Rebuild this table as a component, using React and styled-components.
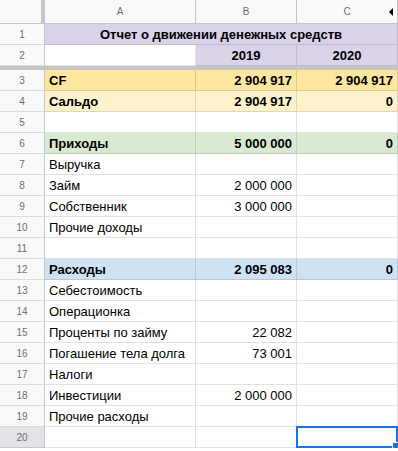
import React from 'react';
import styled, { createGlobalStyle, css } from 'styled-components';

const GlobalStyle = createGlobalStyle`
  html, body {
    margin: 0;
    padding: 0;
    background: #fff;
    overflow: hidden;
  }
  body {
    font-family: 'Liberation Sans', Arial, sans-serif;
  }
`;

const GRID = 'rgba(0, 0, 0, 0.115)';
const HEAD_LINE = '#c4c7c5';

const Sheet = styled.div`
  width: 398px;
  display: flex;
  flex-direction: column;
  font-family: 'Liberation Sans', Arial, sans-serif;
`;

const Row = styled.div`
  display: grid;
  grid-template-columns: 45px 151px 101px 1fr;
  height: ${p => p.$height || 21}px;
`;

const FreezeBar = styled.div`
  height: 4px;
  background: ${HEAD_LINE};
`;

const Corner = styled.div`
  box-sizing: border-box;
  background: #f8f9fa;
  border-right: 4px solid ${HEAD_LINE};
  border-bottom: 1px solid ${HEAD_LINE};
`;

const ColHead = styled.div`
  position: relative;
  box-sizing: border-box;
  background: #f8f9fa;
  border-right: 1px solid ${HEAD_LINE};
  border-bottom: 1px solid ${HEAD_LINE};
  display: flex;
  align-items: center;
  justify-content: center;
  font-size: 10px;
  color: #6f6f6f;
`;

const HiddenArrow = styled.span`
  position: absolute;
  right: 4px;
  top: 8px;
  width: 0;
  height: 0;
  border-top: 4px solid transparent;
  border-bottom: 4px solid transparent;
  border-right: 4px solid #000;
`;

const RowHead = styled.div`
  box-sizing: border-box;
  background: ${p => (p.$active ? '#e1e3e6' : '#f8f9fa')};
  border-right: 1px solid ${HEAD_LINE};
  border-bottom: 1px solid ${GRID};
  display: flex;
  align-items: center;
  justify-content: center;
  font-size: 10px;
  color: #6f6f6f;
`;

const Cell = styled.div`
  position: relative;
  box-sizing: border-box;
  background: ${p => p.$bg || '#fff'};
  border-right: 1px solid ${GRID};
  border-bottom: 1px solid ${GRID};
  padding: 0 4px 2px 4px;
  display: flex;
  align-items: flex-end;
  justify-content: ${p =>
    p.$align === 'right' ? 'flex-end' : p.$align === 'center' ? 'center' : 'flex-start'};
  font-size: 13px;
  line-height: 15px;
  color: #000;
  white-space: nowrap;
  font-weight: ${p => (p.$bold ? 700 : 400)};
  ${p =>
    p.$span &&
    css`
      grid-column: span ${p.$span};
    `}
`;

const Selection = styled.div`
  position: absolute;
  left: -1px;
  top: -1px;
  right: -1px;
  bottom: -1px;
  border: 2px solid #1a73e8;
`;

const Handle = styled.div`
  position: absolute;
  right: -4px;
  bottom: -4px;
  width: 6px;
  height: 6px;
  background: #1a73e8;
  border: 1px solid #fff;
`;

const rows = [
  { n: 3, label: 'CF', b: '2 904 917', c: '2 904 917', bg: '#fde69d', bold: true },
  { n: 4, label: 'Сальдо', b: '2 904 917', c: '0', bg: '#fef2cd', bold: true },
  { n: 5 },
  { n: 6, label: 'Приходы', b: '5 000 000', c: '0', bg: '#d9ead3', bold: true },
  { n: 7, label: 'Выручка' },
  { n: 8, label: 'Займ', b: '2 000 000' },
  { n: 9, label: 'Собственник', b: '3 000 000' },
  { n: 10, label: 'Прочие доходы' },
  { n: 11 },
  { n: 12, label: 'Расходы', b: '2 095 083', c: '0', bg: '#cfe2f3', bold: true },
  { n: 13, label: 'Себестоимость' },
  { n: 14, label: 'Операционка' },
  { n: 15, label: 'Проценты по займу', b: '22 082' },
  { n: 16, label: 'Погашение тела долга', b: '73 001' },
  { n: 17, label: 'Налоги' },
  { n: 18, label: 'Инвестиции', b: '2 000 000' },
  { n: 19, label: 'Прочие расходы' },
  { n: 20, selected: true },
];

const App = () => (
  <>
    <GlobalStyle />
    <Sheet>
      <Row $height={24}>
        <Corner />
        <ColHead>A</ColHead>
        <ColHead>B</ColHead>
        <ColHead>
          C
          <HiddenArrow />
        </ColHead>
      </Row>

      <Row>
        <RowHead>1</RowHead>
        <Cell $span={3} $bg="#d9d2e9" $bold $align="center">
          Отчет о движении денежных средств
        </Cell>
      </Row>
      <Row>
        <RowHead>2</RowHead>
        <Cell />
        <Cell $bg="#d9d2e9" $bold $align="center">2019</Cell>
        <Cell $bg="#d9d2e9" $bold $align="center">2020</Cell>
      </Row>

      <FreezeBar />

      {rows.map(r => (
        <Row key={r.n}>
          <RowHead $active={r.selected}>{r.n}</RowHead>
          <Cell $bg={r.bg} $bold={r.bold}>{r.label}</Cell>
          <Cell $bg={r.bg} $bold={r.bold} $align="right">{r.b}</Cell>
          <Cell $bg={r.bg} $bold={r.bold} $align="right">
            {r.c}
            {r.selected && (
              <Selection>
                <Handle />
              </Selection>
            )}
          </Cell>
        </Row>
      ))}
    </Sheet>
  </>
);

export default App;
